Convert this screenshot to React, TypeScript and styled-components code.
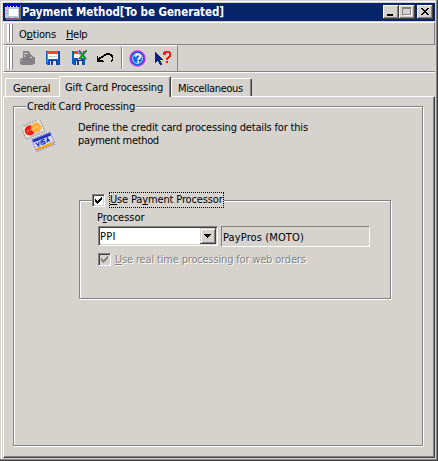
import React from "react";
import styled, { createGlobalStyle } from "styled-components";

const face = "#d6d3ce";
const shade = "#848284";
const dark = "#424142";

const GlobalStyle = createGlobalStyle`
  * { box-sizing: border-box; }
  body { margin: 0; background: ${face}; overflow: hidden; }
  #root { font: 11px/13px "DejaVu Sans Condensed", "DejaVu Sans", sans-serif; font-stretch: condensed; color: #000; }
  svg { display: block; flex: none; }
`;

const Window = styled.main`
  width: 438px;
  height: 461px;
  display: flex;
  flex-direction: column;
  padding: 1px 0 0 1px;
  background: ${face};
  box-shadow: inset -1px -1px ${dark}, inset -2px -2px ${shade}, inset 1px 1px ${face}, inset 2px 2px #fff;
`;
const TitleBar = styled.header`
  display: flex;
  align-items: center;
  height: 18px;
  margin: 2px 3px 0 2px;
  padding: 0 2px 0 2px;
  background: #08246b;
  color: #fff;
`;
const Text = styled.span<{ $spacing?: number }>`
  display: block;
  white-space: nowrap;
  letter-spacing: ${p => p.$spacing ?? 0}px;
  u { text-decoration: underline; text-decoration-thickness: 1px; text-underline-offset: 1px; text-decoration-skip-ink: none; }
`;
const Title = styled(Text)`
  flex: 1;
  margin-left: 1px;
  font-size: 11.5px;
  font-weight: bold;
`;
const WindowButton = styled.span<{ $gap?: number }>`
  width: 16px;
  height: 14px;
  margin-left: ${p => p.$gap ?? 0}px;
  background: ${face};
  box-shadow: inset -1px -1px ${dark}, inset 1px 1px #fff, inset -2px -2px ${shade};
`;
const MenuBar = styled.nav`
  display: flex;
  gap: 10px;
  height: 23px;
  margin: 1px 3px 0 2px;
  padding: 5px 0 0 3px;
  border: solid;
  border-width: 1px;
  border-color: #fff ${shade} ${shade} #fff;
`;
const Grip = styled.span`
  flex: none;
  width: 6px;
  height: 18px;
  margin-top: -4px;
  margin-right: -4px;
  background: linear-gradient(90deg, #fff 2px, ${shade} 2px 3px, #fff 3px 5px, ${shade} 5px);
`;
const ToolArea = styled.div`
  height: 28px;
  margin: 0 3px 0 2px;
  border-bottom: 1px solid #fff;
  box-shadow: inset 0 -1px ${shade};
`;
const ToolBar = styled.div`
  display: flex;
  align-items: flex-start;
  width: 175px;
  height: 27px;
  padding: 1px 0 0 3px;
  border: solid;
  border-width: 1px;
  border-color: #fff ${shade} ${shade} #fff;
`;
const ToolGrip = styled(Grip)`
  height: 22px;
  margin: 0 7px 0 0;
`;
const Tool = styled.span<{ $width: number; $top?: number; $left?: number }>`
  width: ${p => p.$width}px;
  padding-top: ${p => p.$top ?? 4}px;
  padding-left: ${p => p.$left ?? 0}px;
`;
const Separator = styled.i`
  width: 2px;
  height: 22px;
  border-left: 1px solid ${shade};
  border-right: 1px solid #fff;
`;
const Tabs = styled.div`
  display: flex;
  align-items: flex-end;
  height: 23px;
  padding-left: 4px;
`;
const Tab = styled.div<{ $width: number; $selected?: boolean }>`
  position: relative;
  z-index: ${p => p.$selected ? 2 : 1};
  width: ${p => p.$width}px;
  height: ${p => p.$selected ? 21 : 18}px;
  margin-bottom: ${p => p.$selected ? -1 : 0}px;
  padding: ${p => p.$selected ? 4 : 3}px 0 0 ${p => p.$selected ? 5 : 6}px;
  border: solid;
  border-width: 1px 1px 0 1px;
  border-color: #fff ${dark} #fff #fff;
  border-radius: 2px 2px 0 0;
  box-shadow: inset -1px 0 ${shade};
  background: ${face};
`;
const FirstTab = styled(Tab)`
  padding-left: 7px;
  border-right-color: ${face};
  box-shadow: none;
`;
const TabPane = styled.section`
  width: 432px;
  height: 362px;
  margin-left: 2px;
  padding: 10px;
  border: 1px solid;
  border-color: #fff ${dark} ${dark} #fff;
  box-shadow: inset -1px -1px ${shade};
`;
const Group = styled.div<{ $width: number; $height: number }>`
  display: flex;
  flex-direction: column;
  align-items: flex-start;
  width: ${p => p.$width}px;
  height: ${p => p.$height}px;
  border: 1px solid ${shade};
  box-shadow: inset 1px 1px #fff, 1px 1px #fff;
`;
const OuterGroup = styled(Group)`
  margin-left: -1px;
  margin-top: -1px;
`;
const Caption = styled.div`
  height: 13px;
  margin: -7px 0 0 12px;
  padding: 0 1px;
  background: ${face};
`;
const Intro = styled.div`
  display: flex;
  height: 34px;
  margin: 7px 0 0 8px;
`;
const Description = styled.div`
  margin: 1px 0 0 23px;
`;
const InnerGroup = styled(Group)`
  margin: 46px 0 0 65px;
`;
const CheckCaption = styled.div`
  display: flex;
  align-items: center;
  height: 16px;
  margin: -9px 0 0 12px;
  background: ${face};
`;
const CheckBox = styled.span<{ $disabled?: boolean }>`
  flex: none;
  width: 13px;
  height: 13px;
  padding: 2px;
  color: ${p => p.$disabled ? shade : "#000"};
  background: ${p => p.$disabled ? face : "#fff"};
  border: 1px solid;
  border-color: ${shade} #fff #fff ${shade};
  box-shadow: inset 1px 1px ${dark}, inset -1px -1px ${face};
`;
const Focus = styled.div`
  width: 115px;
  height: 16px;
  margin-left: 4px;
  padding-left: 1px;
  padding-top: 1px;
  outline: 1px dotted #000;
  outline-offset: -1px;
`;
const Form = styled.div`
  display: flex;
  flex-direction: column;
  padding: 3px 0 0 18px;
`;
const FieldLabel = styled(Text)`
  margin-left: -1px;
`;
const FieldRow = styled.div`
  display: flex;
  gap: 3px;
  margin-top: 2px;
`;
const Combo = styled.div`
  display: flex;
  justify-content: space-between;
  width: 120px;
  height: 20px;
  padding: 2px 2px 2px 1px;
  background: #fff;
  border: 1px solid;
  border-color: ${shade} #fff #fff ${shade};
  box-shadow: inset 1px 1px ${dark}, inset -1px -1px ${face};
  > span { padding-top: 1px; }
`;
const DropButton = styled.i`
  width: 16px;
  height: 16px;
  margin: -1px -1px 0 0;
  padding: 6px 0 0 4px;
  background: ${face};
  box-shadow: inset -1px -1px ${dark}, inset 1px 1px ${face}, inset 2px 2px #fff, inset -2px -2px ${shade};
`;
const ReadOnly = styled.div`
  width: 149px;
  height: 21px;
  padding: 4px 0 0 1px;
  border: 1px solid;
  border-color: ${shade} #fff #fff ${shade};
`;
const DisabledRow = styled.div`
  display: flex;
  gap: 4px;
  margin-top: 6px;
  color: ${shade};
  text-shadow: 1px 1px #fff;
`;

const Check = () => (
  <svg width="7" height="7" fill="currentColor" shapeRendering="crispEdges">
    <path d="M0 2h1v1h1v1h1V3h1V2h1V1h1V0h1v3H6v1H5v1H4v1H3v1H2V6H1V5H0z" />
  </svg>
);

const FormIcon = () => (
  <svg width="16" height="16" shapeRendering="crispEdges">
    <path d="M2 1h14v15H1z" fill="#666970" />
    <path d="M0 0h14v14H0z" fill="#c6c7ca" />
    <path d="M0 0h15v3H0z" fill="#0000e8" />
    <path d="M2 2h1v1H2zM5 2h1v1H5zM8 2h1v1H8zM11 2h1v1h-1z" fill="#fff" />
    <path d="M2 4h11v10H2z" fill="#b6cad8" />
    <path d="M4 5h9v7H4z" fill="#fff" />
    <path d="M1 6h2v1H1zM1 9h2v1H1zM3 13h2v1H3zM9 13h3v1H9z" fill="#ff7ea6" />
  </svg>
);

const PrinterIcon = () => (
  <svg width="15" height="15" shapeRendering="crispEdges">
    <path d="M3 0h6v1h1v2h1v1h1v1h1v1h2v7h-2v1H1v-1H0V8h1V7h2z" fill={shade} />
    <path d="M4 2h4v1H4zM4 4h1v2H4zM1 9h1v1H1zM10 6h2v1h-2z" fill="#d6d3ce" />
    <path d="M3 8h8v1H3z" fill="#76777a" />
  </svg>
);

const FloppyIcon = () => (
  <svg width="15" height="15" shapeRendering="crispEdges">
    <path d="M0 0h14v14H1v-1H0z" fill="#075ec9" />
    <path d="M1 1h1v11H1z" fill="#2b9bff" />
    <path d="M2 0h10v8H2z" fill="#fff" />
    <path d="M2 0h10v3H2z" fill="#f04432" />
    <path d="M3 5h8v1H3z" fill="#c8cbd4" />
    <path d="M3 9h8v5H3z" fill="#153c7c" />
    <path d="M4 10h6v4H4z" fill="#dce3ed" />
    <path d="M5 10h2v4H5z" fill="#174684" />
    <path d="M13 1h1v13h-1z" fill="#063f8d" />
  </svg>
);

const SaveCloseIcon = () => (
  <svg width="16" height="16" shapeRendering="crispEdges">
    <path d="M0 1h13v14H1v-1H0z" fill="#075ec9" />
    <path d="M2 1h9v7H2z" fill="#fff" />
    <path d="M2 1h5v3H2z" fill="#f04432" />
    <path d="M3 10h8v5H3z" fill="#153c7c" />
    <path d="M4 11h6v4H4z" fill="#dce3ed" />
    <path d="M5 11h2v4H5z" fill="#174684" />
    <path d="M6 0h3v1h1v1h2V1h1V0h2v2h-1v2h-1v2h1v2h1v2h-2V9h-1V7h-2v1H9v2H6V8h1V7h1V5H7V3H6z" fill="#cc8dde" />
    <path d="M7 0h1v1h1v1h1v1h1V2h1V1h1V0h2v2h-1v1h-1v1h-1v2h1v1h1v2h-2V8h-1V7h-1v1H9v1H7V7h1V6h1V4H8V3H7z" fill="#09a414" />
  </svg>
);

const UndoIcon = () => (
  <svg width="16" height="12" shapeRendering="crispEdges">
    <path d="M0 3h1v2h1V4h2V3h2V2h1V1h2V0h4v1h2v1h1v6h-1v1h-1V7h1V4h-1V3h-1V2H9v1H7v1H6v1H4v1H3v1h3v1h1v1H0z" fill="#000" />
  </svg>
);

const HelpIcon = () => (
  <svg width="17" height="17">
    <circle cx="8.5" cy="8.5" r="7.4" fill="#fff" stroke="#c52bf1" strokeWidth="1.5" />
    <circle cx="8.5" cy="8.5" r="6.5" fill="#175ad3" stroke="#1555c6" strokeWidth="1" />
    <circle cx="8.5" cy="8.5" r="5" fill="#1769ed" stroke="#bde0ff" strokeWidth="1" />
    <path d="M6.5 6.7V5.5h1v-1h3v1h1v2h-1v1h-1v1h-1" fill="none" stroke="#fff" strokeWidth="1.4" />
    <path d="M8 11h2v1.5H8z" fill="#fff" />
  </svg>
);

const ContextHelpIcon = () => (
  <svg width="17" height="16" shapeRendering="crispEdges">
    <path d="M0 1h1v1h1v1h1v1h1v1h1v1h1v1h1v1h1v1H5v1h1v2h1v2H5v-1H4v-2H3v-1H2v1H1v1H0z" fill="#0b208c" />
    <path d="M8 1h1V0h6v1h1v5h-1v1h-1v1h-1v1h-2V7h1V6h1V5h1V2h-3v2H8z" fill="#f5201b" />
    <path d="M11 10h2v2h-2z" fill="#f5201b" />
  </svg>
);

const CardsIcon = () => (
  <svg width="33" height="33">
    <g transform="rotate(-24 11 10)">
      <rect x="1" y="2.5" width="20.5" height="13" fill="#e5dfdc" stroke="#929292" strokeDasharray="2 1" />
      <circle cx="8" cy="9" r="5.1" fill="#f61e12" />
      <circle cx="14.8" cy="9" r="5.1" fill="#ffae3c" />
      <path d="M5 9h2m1 0h2m1 0h2m1 0h3" stroke="#ffc9b4" strokeWidth="0.8" />
    </g>
    <g transform="rotate(-22 21 22)">
      <rect x="11.5" y="15.5" width="20" height="13" fill="#dcdefa" stroke="#7378ee" strokeDasharray="2 1" />
      <path d="M12 16h19v3H12z" fill="#2334bb" />
      <path d="M12 25.5h19V28H12z" fill="#f2a515" />
      <path d="M14 20l1.5 4 2-4m2 0l-1 4m5-4h-3v2h2v2h-3m5 0l2-4 1 4m-2-1h2" fill="none" stroke="#263abb" strokeWidth="1.25" />
    </g>
  </svg>
);

export default function App() {
  return (
    <>
      <GlobalStyle />
      <Window>
        <TitleBar>
          <FormIcon />
          <Title $spacing={-0.05}>Payment Method[To be Generated]</Title>
          <WindowButton>
            <svg width="16" height="14"><path d="M4 9h6v2H4z" /></svg>
          </WindowButton>
          <WindowButton>
            <svg width="16" height="14" fill="none" shapeRendering="crispEdges">
              <path d="M4.5 10.5h8v-7" stroke="#fff" />
              <path d="M3.5 2.5h8v7h-8zM3 3.5h9" stroke={shade} />
            </svg>
          </WindowButton>
          <WindowButton $gap={2}>
            <svg width="16" height="14" shapeRendering="crispEdges">
              <path d="M4 3h2v1h1v1h2V4h1V3h2v1h-1v1h-1v1H9v1h1v1h1v1h1v1h-2V9H9V8H7v1H6v1H4V9h1V8h1V7h1V6H6V5H5V4H4z" />
            </svg>
          </WindowButton>
        </TitleBar>
        <MenuBar>
          <Grip />
          <Text $spacing={-0.18}>O<u>p</u>tions</Text>
          <Text $spacing={-0.3}><u>H</u>elp</Text>
        </MenuBar>
        <ToolArea>
          <ToolBar>
            <ToolGrip />
            <Tool $width={26}><PrinterIcon /></Tool>
            <Tool $width={26}><FloppyIcon /></Tool>
            <Tool $width={25} $top={3}><SaveCloseIcon /></Tool>
            <Tool $width={24} $top={6}><UndoIcon /></Tool>
            <Separator />
            <Tool $width={32} $top={3} $left={6}><HelpIcon /></Tool>
            <Tool $width={17} $top={4}><ContextHelpIcon /></Tool>
          </ToolBar>
        </ToolArea>
        <Tabs>
          <FirstTab $width={54}><Text $spacing={-0.25}>General</Text></FirstTab>
          <Tab $width={112} $selected><Text $spacing={-0.08}>Gift Card Processing</Text></Tab>
          <Tab $width={81}><Text $spacing={-0.35}>Miscellaneous</Text></Tab>
        </Tabs>
        <TabPane>
          <OuterGroup $width={410} $height={340}>
            <Caption><Text $spacing={-0.18}>Credit Card Processing</Text></Caption>
            <Intro>
              <CardsIcon />
              <Description>
                <Text $spacing={-0.17}>Define the credit card processing details for this</Text>
                <Text $spacing={-0.33}>payment method</Text>
              </Description>
            </Intro>
            <InnerGroup $width={312} $height={99}>
              <CheckCaption>
                <CheckBox><Check /></CheckBox>
                <Focus><Text $spacing={-0.15}><u>U</u>se Pa<u>y</u>ment Processor</Text></Focus>
              </CheckCaption>
              <Form>
                <FieldLabel>P<u>r</u>ocessor</FieldLabel>
                <FieldRow>
                  <Combo>
                    <Text $spacing={0.3}>PPI</Text>
                    <DropButton><svg width="7" height="4" shapeRendering="crispEdges"><path d="M0 0h7v1H6v1H5v1H4v1H3V3H2V2H1V1H0z" /></svg></DropButton>
                  </Combo>
                  <ReadOnly><Text $spacing={0.12}>PayPros (MOTO)</Text></ReadOnly>
                </FieldRow>
                <DisabledRow>
                  <CheckBox $disabled><Check /></CheckBox>
                  <Text $spacing={-0.17}><u>U</u>se real time processing for web orders</Text>
                </DisabledRow>
              </Form>
            </InnerGroup>
          </OuterGroup>
        </TabPane>
      </Window>
    </>
  );
}
